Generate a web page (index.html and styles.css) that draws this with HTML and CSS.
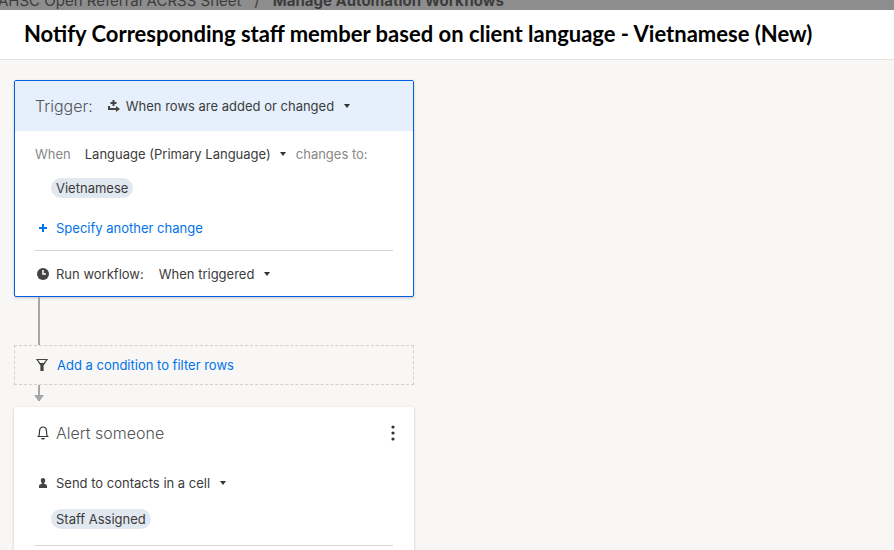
FILE: index.html
```html
<!DOCTYPE html>
<html lang="en">
<head>
  <meta charset="UTF-8">
  <meta name="viewport" content="width=device-width, initial-scale=1.0">
  <title>Manage Automation Workflows</title>
  <link rel="stylesheet" href="styles.css">
</head>
<body>

  <nav class="breadcrumb">
    <span>AHSC Open Referral ACRSS Sheet</span>
    <span class="divider">/</span>
    <strong>Manage Automation Workflows</strong>
  </nav>

  <header class="title-bar">
    <h1>Notify Corresponding staff member based on client language - Vietnamese (New)</h1>
  </header>

  <main class="workflow">

    <!-- Trigger -->
    <section class="card card-active">
      <div class="card-head">
        <h2>Trigger:</h2>
        <svg class="icon icon-rows" width="12" height="12" viewBox="0 0 12 12" aria-hidden="true">
          <path d="M5.500 0v6M2.500 3h6" fill="none" stroke="#444" stroke-width="2"/>
          <path d="M1 6v3h9" fill="none" stroke="#444" stroke-width="2"/>
          <path d="M8 6l4 3-4 3z" fill="#444"/>
        </svg>
        <span class="picker">
          <select aria-label="Trigger type">
            <option>When rows are added or changed</option>
          </select>
          <svg class="caret" width="6" height="4" viewBox="0 0 6 4" aria-hidden="true"><path d="M0 0h6L3 4z"/></svg>
        </span>
      </div>

      <div class="card-body">
        <div class="row row-when">
          <label class="muted" for="column">When</label>
          <span class="picker">
            <select id="column">
              <option>Language (Primary Language)</option>
            </select>
            <svg class="caret" width="6" height="4" viewBox="0 0 6 4" aria-hidden="true"><path d="M0 0h6L3 4z"/></svg>
          </span>
          <span class="muted">changes to:</span>
        </div>

        <div class="chips"><span class="chip">Vietnamese</span></div>

        <button type="button" class="link-btn">
          <svg class="icon" width="16" height="16" viewBox="0 0 16 16" aria-hidden="true">
            <path d="M8 4v8M4 8h8" stroke="#0073ec" stroke-width="2"/>
          </svg>
          Specify another change
        </button>

        <hr>

        <div class="row row-run">
          <svg class="icon" width="16" height="16" viewBox="0 0 16 16" aria-hidden="true">
            <circle cx="8" cy="8" r="6" fill="#444"/>
            <path d="M8 4v4h3" fill="none" stroke="#fff" stroke-width="1.500"/>
          </svg>
          <label for="run">Run workflow:</label>
          <span class="picker">
            <select id="run">
              <option>When triggered</option>
            </select>
            <svg class="caret" width="6" height="4" viewBox="0 0 6 4" aria-hidden="true"><path d="M0 0h6L3 4z"/></svg>
          </span>
        </div>
      </div>
    </section>

    <div class="connector"></div>

    <!-- Condition -->
    <button type="button" class="link-btn condition">
      <svg class="icon" width="14" height="14" viewBox="0 0 14 14" aria-hidden="true">
        <path d="M2 1.500h10L8 7v5.500H6V7z" fill="none" stroke="#444" stroke-width="1.200"/>
        <path d="M3.500 5h7L8 7.500v5H6v-5z" fill="#444"/>
      </svg>
      Add a condition to filter rows
    </button>

    <div class="connector connector-arrow">
      <svg width="10" height="6" viewBox="0 0 10 6" aria-hidden="true"><path d="M0 0h10L6 5.500H4z" fill="#a6a6a6"/></svg>
    </div>

    <!-- Action -->
    <section class="card card-action">
      <div class="card-head">
        <svg class="icon" width="16" height="16" viewBox="0 0 16 16" aria-hidden="true">
          <path d="M2.500 11.500h11M3.500 11.500c1-1 1-2 1-5 0-3 1.500-4.500 3.500-4.500s3.500 1.500 3.500 4.500c0 3 0 4 1 5" fill="none" stroke="#333" stroke-width="1.200"/>
          <path d="M6 13h4c-.5 1.300-1 1.600-2 1.600S6.500 14.300 6 13z" fill="#333"/>
        </svg>
        <h2>Alert someone</h2>
        <button type="button" class="menu-btn" aria-label="More options">
          <svg width="4" height="16" viewBox="0 0 4 16" aria-hidden="true">
            <circle cx="2" cy="2" r="1.600"/><circle cx="2" cy="8" r="1.600"/><circle cx="2" cy="14" r="1.600"/>
          </svg>
        </button>
      </div>

      <div class="card-body">
        <div class="row">
          <svg class="icon" width="16" height="16" viewBox="0 0 16 16" aria-hidden="true">
            <path d="M8 3c1.400 0 2.200 1 2.200 2.200S9.700 7.500 9.200 8v.8c1.800.5 2.800 1 2.800 2.200v2H4v-2c0-1.200 1-1.700 2.800-2.200V8C6.300 7.500 5.800 6.400 5.800 5.200S6.600 3 8 3z" fill="#444"/>
          </svg>
          <span class="picker">
            <select aria-label="Recipients">
              <option>Send to contacts in a cell</option>
            </select>
            <svg class="caret" width="6" height="4" viewBox="0 0 6 4" aria-hidden="true"><path d="M0 0h6L3 4z"/></svg>
          </span>
        </div>

        <div class="chips"><span class="chip">Staff Assigned</span></div>

        <hr>
      </div>
    </section>

  </main>

</body>
</html>
```
FILE: styles.css
```css
* { margin: 0; padding: 0; box-sizing: border-box; }

body {
  height: 100vh;
  display: flex;
  flex-direction: column;
  overflow: hidden;
  background: #f8f7f5;
  color: #3c3c3c;
  font-family: Inter, "Liberation Sans", sans-serif;
  font-size: 13px;
  line-height: 20px;
}

button, select { font: inherit; color: inherit; background: none; border: none; cursor: pointer; }

.icon { flex: none; }

/* Page header, only its lower edge shows above the panel */
.breadcrumb {
  display: flex;
  flex: none;
  align-items: flex-end;
  gap: 13px;
  height: 10px;
  margin-left: -2px;
  overflow: hidden;
  background: #8d8d8d;
  font-size: 15px;
  line-height: 18px;
  white-space: nowrap;
}

.title-bar {
  flex: none;
  padding: 9px 24px 10px;
  background: #fff;
  border-bottom: 1px solid #e3e2e1;
}

.title-bar h1 {
  color: #000;
  font-family: Lato, "Liberation Sans", sans-serif;
  font-size: 22px;
  font-weight: 700;
  line-height: 30px;
  white-space: nowrap;
}

.workflow {
  flex: 1;
  min-height: 0;
  padding: 20px 14px;
  overflow: hidden;
}

/* Cards */
.card {
  max-width: 400px;
  background: #fff;
  border: 1px solid #fff;
  border-radius: 2px;
  box-shadow: 0 1px 3px rgba(0, 0, 0, .2);
}

.card-active { border-color: #005ee0; }
.card-active .card-head { background: #e5f0fc; }

.card-head {
  display: flex;
  align-items: center;
  height: 50px;
  padding: 0 20px;
}

.card-head h2 {
  color: #555;
  font-size: 16px;
  font-weight: 300;
}

.card-head > .icon + h2 { margin-left: 5px; }
.icon-rows { margin: 0 6px 0 15px; }

.card-body { padding: 13px 20px 12px; }

.row { display: flex; align-items: center; gap: 5px; }
.row-when { gap: 14px; }
.row-when .picker + .muted { margin-left: -4px; }
.row-run .picker { margin-left: 10px; }

.muted { color: #888; }

.picker { display: inline-flex; align-items: center; gap: 9px; }
.picker select { appearance: none; height: 20px; }
.caret { fill: #333; }

.chips { display: flex; padding: 14px 16px 0; }

.chip {
  padding: 0 5px;
  background: #e1e8ef;
  border-radius: 10px;
}

.link-btn {
  display: flex;
  align-items: center;
  gap: 5px;
  color: #0073ec;
}

.card-body .link-btn { margin-top: 20px; }

hr { border: none; border-top: 1px solid #d5d5d5; margin: 12px 0 13px; }

.card-action .card-body { padding-top: 15px; }
.card-action .chips { padding-top: 16px; }
.card-action hr { margin-top: 16px; }

.menu-btn { display: flex; margin-left: auto; margin-right: -2px; }
.menu-btn svg { fill: #333; }

/* Lines between the steps */
.connector {
  width: 2px;
  height: 48px;
  margin-left: 24px;
  background: #a6a6a6;
}

.connector-arrow {
  display: flex;
  align-items: flex-end;
  justify-content: center;
  height: 16px;
  margin-bottom: 6px;
}

.connector-arrow svg { flex: none; }

.condition {
  width: 100%;
  max-width: 400px;
  height: 40px;
  padding: 0 20px;
  gap: 8px;
  border: 1px dashed #d0d0ce;
}
```
